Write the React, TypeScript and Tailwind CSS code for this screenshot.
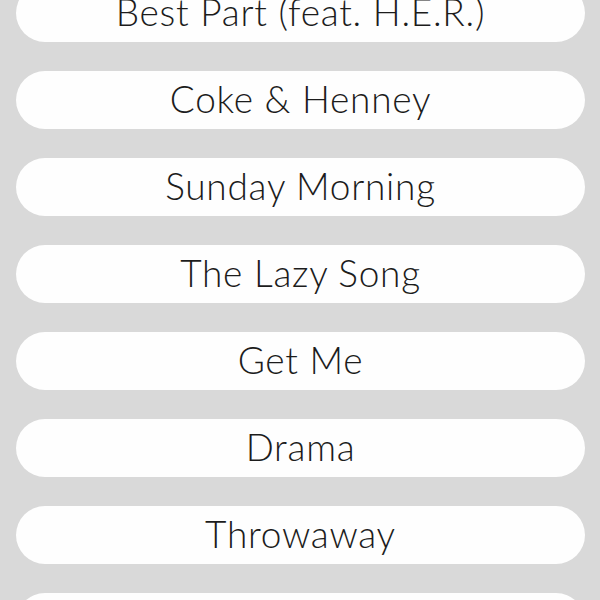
const songs = [
  "Best Part (feat. H.E.R.)",
  "Coke & Henney",
  "Sunday Morning",
  "The Lazy Song",
  "Get Me",
  "Drama",
  "Throwaway",
  "Location",
];

export default function App() {
  return (
    <div className="h-[600px] w-[600px] overflow-hidden bg-[#d9d9d9]">
      <ul className="-mt-4 flex flex-col gap-[29px] pl-4 pr-[15px]">
        {songs.map((song) => (
          <li
            key={song}
            className="flex h-[58px] shrink-0 items-center justify-center rounded-full bg-[#fefefe] pb-[3px] font-['Lato',sans-serif] text-[37px] font-light tracking-[0.02em] text-[#1c1c1c]"
          >
            {song}
          </li>
        ))}
      </ul>
    </div>
  );
}
